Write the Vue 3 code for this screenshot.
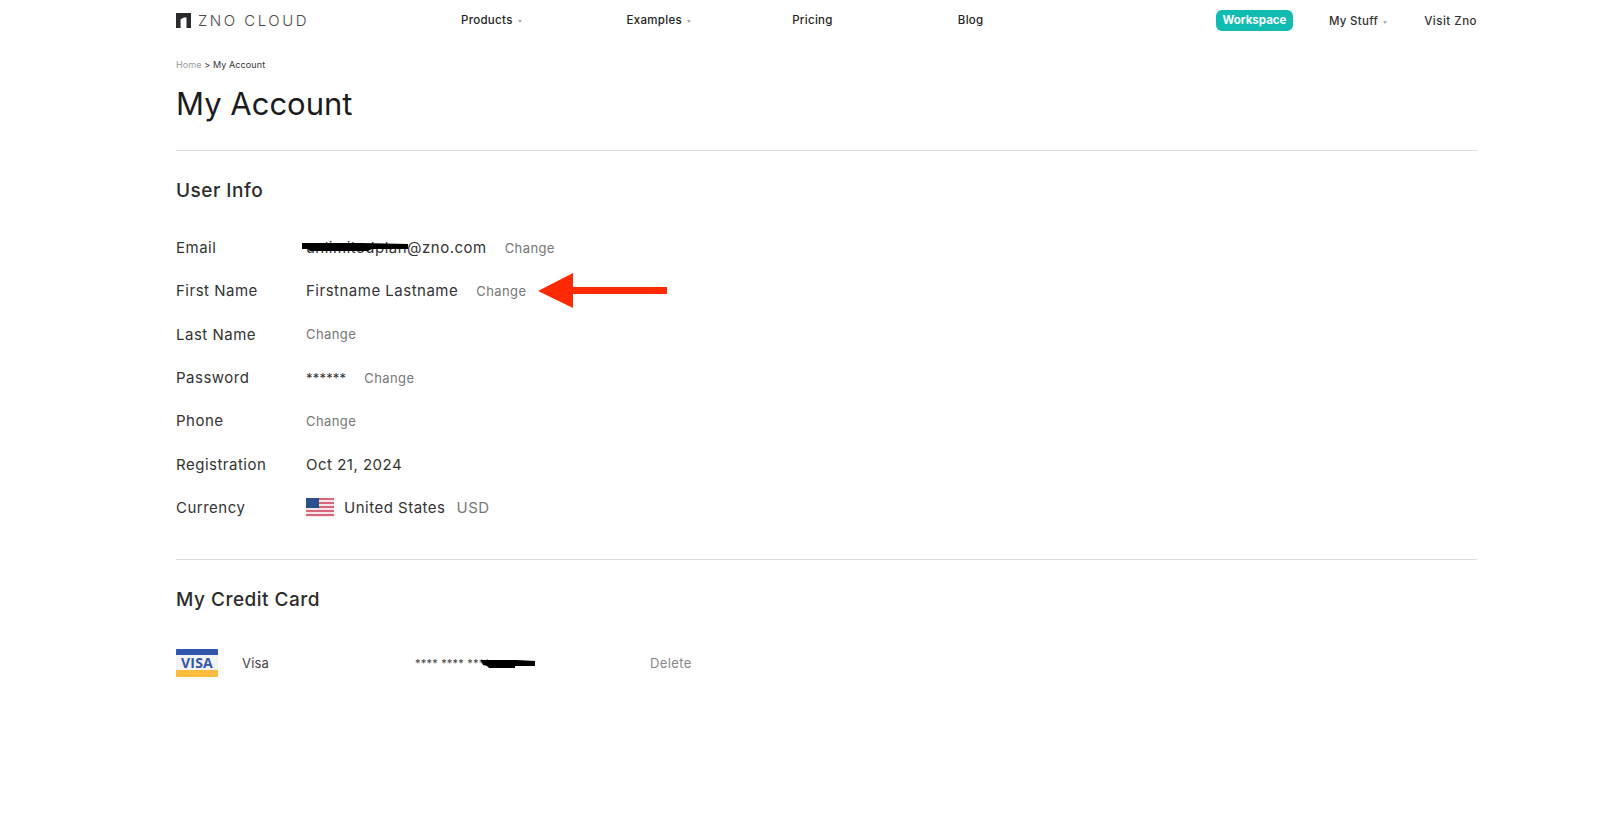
<template>
  <div class="page">
    <header class="nav">
      <a class="logo">
        <svg width="15" height="15" viewBox="0 0 15 15"><path d="M0 0H15V15H10.5V4.5L8 4.5 4.6 6.2V15H0Z" fill="#2b2b2e"/></svg>
        <span class="logo-text">ZNO CLOUD</span>
      </a>
      <nav class="menu">
        <a v-for="item in menu" :key="item.label" class="menu-item">
          {{ item.label }}<i v-if="item.caret" class="caret"></i>
        </a>
      </nav>
      <div class="nav-right">
        <a class="workspace">Workspace</a>
        <a class="side-link">My Stuff<i class="caret"></i></a>
        <a class="side-link visit">Visit Zno</a>
      </div>
    </header>

    <div class="crumb"><span class="crumb-home">Home</span> &gt; My Account</div>
    <h1>My Account</h1>

    <section class="user-info">
      <h2>User Info</h2>
      <div class="rows">
        <div class="row">
          <label>Email</label>
          <span class="value email">unlimitedplan@zno.com<svg class="scribble" width="106" height="8" viewBox="0 0 106 8"><path d="M0 0H60L106 1V6L70 6 66 8 8 8 6 6 0 6Z" fill="#000"/></svg></span>
          <a class="change">Change</a>
        </div>
        <div class="row">
          <label>First Name</label>
          <span class="value">Firstname Lastname</span>
          <a class="change">Change</a>
          <svg class="arrow" width="130" height="36" viewBox="0 0 130 36"><path d="M0 18L35 0V14H129V21H35V35Z" fill="#ff2a04"/></svg>
        </div>
        <div class="row">
          <label>Last Name</label>
          <a class="change">Change</a>
        </div>
        <div class="row">
          <label>Password</label>
          <span class="value stars">******</span>
          <a class="change">Change</a>
        </div>
        <div class="row">
          <label>Phone</label>
          <a class="change">Change</a>
        </div>
        <div class="row">
          <label>Registration</label>
          <span class="value">Oct 21, 2024</span>
        </div>
        <div class="row">
          <label>Currency</label>
          <svg class="flag" width="28" height="19" viewBox="0 0 28 19">
            <rect width="28" height="19" fill="#f6e6e8"/>
            <rect v-for="n in 5" :key="n" x="0" :y="(n - 1) * 4" width="28" height="2" fill="#d9667c"/>
            <rect width="13" height="10" fill="#2b4f8c"/>
          </svg>
          <span class="value">United States</span>
          <span class="usd">USD</span>
        </div>
      </div>
    </section>

    <section class="cards">
      <h2>My Credit Card</h2>
      <div class="card-row">
        <svg class="visa" width="42" height="28" viewBox="0 0 42 28">
          <rect width="42" height="28" rx="1" fill="#f3f3f5"/>
          <path d="M1 0H41A1 1 0 0 1 42 1V6H0V1A1 1 0 0 1 1 0Z" fill="#3156ac"/>
          <path d="M0 21H42V27A1 1 0 0 1 41 28H1A1 1 0 0 1 0 27Z" fill="#fdbd3c"/>
          <text x="21" y="18.5" text-anchor="middle" class="visa-text">VISA</text>
        </svg>
        <span class="card-name">Visa</span>
        <span class="card-no">**** **** ****<svg class="scribble" width="54" height="8" viewBox="0 0 54 8"><path d="M0 0H36L54 1V6L34 6V8L8 8 6 6 2 5Z" fill="#000"/></svg></span>
        <a class="delete">Delete</a>
      </div>
    </section>
  </div>
</template>

<script setup>
const menu = [
  { label: "Products", caret: true },
  { label: "Examples", caret: true },
  { label: "Pricing", caret: false },
  { label: "Blog", caret: false }
];
</script>

<style>
body {
  background: #fff;
}
</style>

<style scoped>
.page {
  width: 1301px;
  margin-left: 176px;
  height: 827px;
  overflow: hidden;
  font-family: Inter, "Liberation Sans", sans-serif;
  color: #2a2a2a;
}

.nav {
  display: flex;
  align-items: center;
  height: 41px;
}

.logo {
  display: flex;
  align-items: center;
  gap: 7px;
  width: 285px;
}

.logo-text {
  font-size: 15px;
  font-weight: 300;
  letter-spacing: 2.5px;
  color: #4a4a4a;
}

.menu {
  display: flex;
  padding-bottom: 1px;
}

.menu-item {
  width: 165.6px;
  font-size: 11.5px;
  font-weight: 500;
  letter-spacing: 0.3px;
  color: #222;
}

.caret {
  display: inline-block;
  margin-left: 5px;
  vertical-align: 1px;
  border-left: 2px solid transparent;
  border-right: 2px solid transparent;
  border-top: 3px solid #aaa;
}

.nav-right {
  display: flex;
  align-items: center;
  margin-left: auto;
}

.workspace {
  width: 77px;
  height: 21px;
  line-height: 21px;
  text-align: center;
  border-radius: 6px;
  background: #10bcb1;
  color: #fff;
  font-size: 11.5px;
  font-weight: 700;
}

.side-link {
  font-size: 11.5px;
  font-weight: 500;
  letter-spacing: 0.3px;
  color: #333;
}

.visit {
  letter-spacing: 0.5px;
}

.workspace + .side-link {
  margin-left: 36px;
  margin-right: 37px;
}

.crumb {
  margin-top: 18px;
  font-size: 9px;
  letter-spacing: 0.1px;
  line-height: 12px;
  color: #333;
}

.crumb-home {
  color: #999;
}

h1 {
  margin: 13px 0 0;
  font-size: 31px;
  line-height: 40px;
  font-weight: 400;
  color: #1c1c1c;
}

.user-info {
  margin-top: 26px;
  border-top: 1px solid #dcdcdc;
  padding-top: 28px;
}

h2 {
  margin: 0;
  font-size: 19px;
  letter-spacing: 0.5px;
  line-height: 24px;
  font-weight: 500;
  color: #2c2c2c;
}

.rows {
  margin-top: 23px;
}

.row {
  display: flex;
  align-items: center;
  height: 43.3px;
  font-size: 15px;
  letter-spacing: 0.5px;
  color: #333;
}

.row label {
  width: 130px;
  flex: none;
}

.value {
  position: relative;
  margin-right: 18px;
}

.stars {
  font-size: 13px;
  letter-spacing: 0.2px;
}

.scribble {
  position: absolute;
  left: -4px;
  top: 5px;
}

.change {
  font-size: 13px;
  letter-spacing: 0.4px;
  color: #777;
}

.arrow {
  margin-left: 12px;
}

.flag {
  margin-right: 10px;
}

.row .flag + .value {
  margin-right: 11px;
}

.usd {
  color: #777;
}

.cards {
  margin-top: 30px;
  border-top: 1px solid #dcdcdc;
  padding-top: 28px;
}

.card-row {
  display: flex;
  align-items: center;
  margin-top: 37px;
  font-size: 13px;
  letter-spacing: 0.2px;
  color: #444;
}

.visa {
  flex: none;
}

.visa-text {
  font-family: "Open Sans", "Liberation Sans", sans-serif;
  font-size: 14px;
  font-weight: 700;
  fill: #3156ac;
}

.card-name {
  margin-left: 24px;
  width: 173px;
}

.card-no {
  position: relative;
  width: 235px;
  font-size: 11px;
}

.card-no .scribble {
  left: 66px;
  top: 4px;
}

.delete {
  letter-spacing: 0.4px;
  color: #888;
}
</style>
